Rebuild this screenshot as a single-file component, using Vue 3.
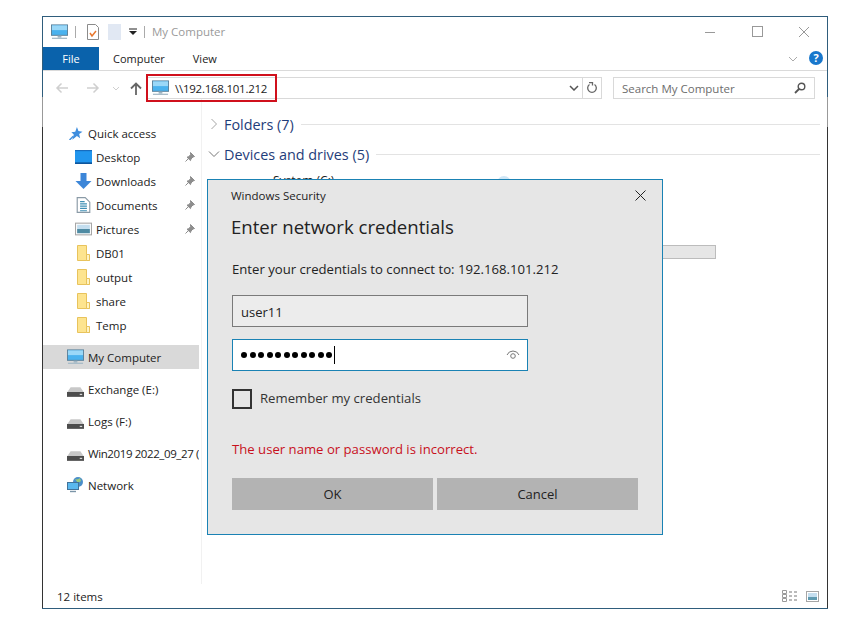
<script setup>
const quick = [
  { label: 'Desktop', icon: 'desktop', pin: true },
  { label: 'Downloads', icon: 'down', pin: true },
  { label: 'Documents', icon: 'doc', pin: true },
  { label: 'Pictures', icon: 'pic', pin: true },
  { label: 'DB01', icon: 'folder' },
  { label: 'output', icon: 'folder' },
  { label: 'share', icon: 'folder' },
  { label: 'Temp', icon: 'folder' },
]
const drives = [
  { label: 'Exchange (E:)' },
  { label: 'Logs (F:)' },
  { label: 'Win2019 2022_09_27 (G:)', tight: true },
]
const dots = 11
</script>

<template>
  <div class="page">
    <svg class="defs" aria-hidden="true">
      <symbol id="mon" viewBox="0 0 18 16">
        <rect x="0.5" y="0.5" width="17" height="11" fill="#4ab2ee" stroke="#5a7f98" />
        <rect x="1" y="1" width="16" height="5" fill="#9ad8f8" />
        <rect x="7" y="12" width="4" height="2" fill="#9fb4c2" />
        <rect x="1" y="14" width="16" height="1.4" fill="#a9bcc8" />
      </symbol>
      <symbol id="desktop" viewBox="0 0 16 13">
        <rect width="16" height="13" fill="#2196ee" />
        <rect width="16" height="1" fill="#1668b8" />
        <rect y="11.6" width="16" height="1.4" fill="#0b4f94" />
      </symbol>
      <symbol id="down" viewBox="0 0 16 16">
        <path d="M5 0h6v8h5l-8 8-8-8h5z" fill="#3c86d8" />
      </symbol>
      <symbol id="doc" viewBox="0 0 12 14">
        <path d="M.5.5h7l4 4v9H.5z" fill="#fff" stroke="#8a9aa6" />
        <path d="M3 4h4M3 6h6M3 8h6M3 10h6M3 12h6" stroke="#3f8fb5" />
      </symbol>
      <symbol id="pic" viewBox="0 0 16 12">
        <rect x=".5" y=".5" width="15" height="11" fill="#fff" stroke="#a6a6a6" />
        <rect x="2" y="2" width="12" height="4" fill="#c4deef" />
        <rect x="2" y="6" width="12" height="4" fill="#4f8ba3" />
      </symbol>
      <symbol id="folder" viewBox="0 0 13 16">
        <path d="M.5.5h9v12h3v3H.5z" fill="#fde48f" stroke="#e8c35c" />
        <path d="M9.5 9.5h3v6h-3z" fill="#fff3c4" stroke="#e8c35c" />
      </symbol>
      <symbol id="pin" viewBox="0 0 10 10">
        <path d="M5.5.5l4 4-1.5.5-2 2-.5 1.6L2 5.2l1.6-.5 2-2zM3.4 6.6L.5 9.5" fill="#8d8d8d" stroke="#8d8d8d" />
      </symbol>
      <symbol id="drive" viewBox="0 0 14 8">
        <path d="M3 0h8l3 4.5H0z" fill="#c8c8c8" />
        <rect y="4" width="14" height="4" fill="#4d4d4d" />
        <rect x="10.5" y="5.5" width="2" height="1" fill="#d8d8d8" />
      </symbol>
      <symbol id="star" viewBox="0 0 14 14">
        <path d="M8 0l1.6 4.2L14 5l-3.6 2.6 1 4.4L8 9.600 3 13.600 4.600 8 2 5.600l4.200-.6z" fill="#3f8ede" />
        <path d="M0 14l4-4" stroke="#3f8ede" stroke-width="1.5" />
      </symbol>
      <symbol id="net" viewBox="0 0 17 16">
        <circle cx="11" cy="5" r="5" fill="#4b8fc9" />
        <path d="M8 2c2 1 4 0 5-1l1 3-3 2z" fill="#9ccb7d" />
        <rect x=".5" y="5.5" width="11" height="7" fill="#5ab8ee" stroke="#41739a" />
        <path d="M3 14.500h6" stroke="#7b95a8" stroke-width="1.400" />
      </symbol>
    </svg>

    <div class="window">
      <header class="titlebar">
        <svg class="ic-title"><use href="#mon" /></svg>
        <span class="tsep"></span>
        <svg class="qat-doc" viewBox="0 0 12 16">
          <path d="M.5.5h8l3 3v12H.5z" fill="#fff" stroke="#8b8b8b" />
          <path d="M3 9l2 3 4-5" fill="none" stroke="#e8762c" stroke-width="1.500" />
        </svg>
        <span class="qat-blank"></span>
        <svg class="qat-arrow" viewBox="0 0 8 8">
          <path d="M0 1h8" stroke="#222" />
          <path d="M0 3h8L4 7z" fill="#222" />
        </svg>
        <span class="tsep sep2"></span>
        <span class="title-text">My Computer</span>
        <div class="winctl">
          <svg class="w12" viewBox="0 0 12 12"><path d="M1 6.500h10" stroke="#999" /></svg>
          <svg class="w12 max" viewBox="0 0 12 12"><rect x=".5" y=".5" width="10" height="10" fill="none" stroke="#999" /></svg>
          <svg class="w12" viewBox="0 0 12 12"><path d="M1 1l10 10M11 1L1 11" stroke="#999" /></svg>
        </div>
      </header>

      <nav class="tabs">
        <span class="file">File</span>
        <span class="tab tab-c">Computer</span>
        <span class="tab tab-v">View</span>
        <svg class="ribbon-chev" viewBox="0 0 10 6"><path d="M1 1l4 4 4-4" fill="none" stroke="#aaa" /></svg>
        <span class="help">?</span>
      </nav>

      <div class="navbar">
        <div class="arrows">
          <svg class="arr" viewBox="0 0 14 12"><path d="M13 6H2M6.500 1.500L2 6l4.500 4.500" fill="none" stroke="#cfcfcf" stroke-width="1.500" /></svg>
          <svg class="arr" viewBox="0 0 14 12"><path d="M1 6h11M7.500 1.500L12 6l-4.500 4.500" fill="none" stroke="#cfcfcf" stroke-width="1.500" /></svg>
          <svg class="mini" viewBox="0 0 8 5"><path d="M1 1l3 3 3-3" fill="none" stroke="#cfcfcf" /></svg>
          <svg class="up" viewBox="0 0 12 13"><path d="M6 13V2M1 6.500L6 1.500l5 5" fill="none" stroke="#666" stroke-width="1.800" /></svg>
        </div>
        <div class="address">
          <svg class="ic-addr"><use href="#mon" /></svg>
          <span class="addr-text">\\192.168.101.212</span>
          <svg class="addr-chev" viewBox="0 0 10 6"><path d="M1 1l4 4 4-4" fill="none" stroke="#555" stroke-width="1.500" /></svg>
          <span class="refresh">
            <svg viewBox="0 0 12 12" class="w12"><path d="M3.500 2.500a4.300 4.300 0 1 0 5 0M3 .5h3.500v3" fill="none" stroke="#666" stroke-width="1.300" /></svg>
          </span>
          <span class="redbox"></span>
        </div>
        <div class="search">
          <span>Search My Computer</span>
          <svg class="w12" viewBox="0 0 12 12"><circle cx="7.500" cy="4.500" r="3.300" fill="none" stroke="#555" stroke-width="1.400" /><path d="M5 7l-4 4" stroke="#555" stroke-width="1.800" /></svg>
        </div>
      </div>

      <div class="body">
        <aside class="side">
          <div class="row head">
            <svg class="ic star"><use href="#star" /></svg>
            <span>Quick access</span>
          </div>
          <div v-for="q in quick" :key="q.label" class="row sub">
            <svg class="ic"><use :href="'#' + q.icon" /></svg>
            <span>{{ q.label }}</span>
            <svg v-if="q.pin" class="pin"><use href="#pin" /></svg>
          </div>
          <div class="row head sel gap">
            <svg class="ic"><use href="#mon" /></svg>
            <span>My Computer</span>
          </div>
          <div v-for="d in drives" :key="d.label" class="row head gap">
            <svg class="ic drive"><use href="#drive" /></svg>
            <span :class="{ tight: d.tight }">{{ d.label }}</span>
          </div>
          <div class="row head gap">
            <svg class="ic"><use href="#net" /></svg>
            <span>Network</span>
          </div>
        </aside>
        <main class="content">
          <div class="group">
            <svg class="chev" viewBox="0 0 8 12"><path d="M1.500 1l5 5-5 5" fill="none" stroke="#a6a6a6" /></svg>
            <span>Folders (7)</span>
            <i></i>
          </div>
          <div class="group">
            <svg class="chev2" viewBox="0 0 12 8"><path d="M1 1.500l5 5 5-5" fill="none" stroke="#777" /></svg>
            <span>Devices and drives (5)</span>
            <i></i>
          </div>
          <div class="drive-name">
            <span>System (C:)</span>
            <span class="os-logo"></span>
          </div>
          <div class="usage"></div>
        </main>
      </div>

      <footer class="status">
        <span>12 items</span>
        <div class="views">
          <svg class="v1" viewBox="0 0 16 12">
            <path d="M.5.500h4v3h-4zM.5 4.500h4v3h-4zM.5 8.500h4v3h-4z" fill="#fff" stroke="#9a9a9a" />
            <path d="M7 2h3M12 2h3M7 6h3M12 6h3M7 10h3M12 10h3" stroke="#777" />
          </svg>
          <svg class="v2" viewBox="0 0 13 11">
            <rect x=".5" y=".5" width="12" height="10" fill="#fff" stroke="#a6a6a6" />
            <rect x="2" y="2" width="9" height="4" fill="#c4deef" />
            <rect x="2" y="6" width="9" height="3" fill="#5f9ab0" />
          </svg>
        </div>
      </footer>

      <section class="dialog">
        <div class="dlg-top">
          <span>Windows Security</span>
          <svg class="x" viewBox="0 0 11 11"><path d="M.5.500l10 10M10.500.500l-10 10" stroke="#222" /></svg>
        </div>
        <h1>Enter network credentials</h1>
        <p class="connect">Enter your credentials to connect to: 192.168.101.212</p>
        <div class="input">user11</div>
        <div class="input pass">
          <span v-for="n in dots" :key="n" class="dot"></span>
          <span class="caret"></span>
          <svg class="eye" viewBox="0 0 14 10">
            <path d="M1 5a6.500 6.500 0 0 1 12 0" fill="none" stroke="#777" />
            <circle cx="7" cy="6" r="2.300" fill="none" stroke="#777" />
          </svg>
        </div>
        <label class="remember"><span class="box"></span><span class="rem-text">Remember my credentials</span></label>
        <p class="err">The user name or password is incorrect.</p>
        <div class="btns">
          <span class="btn">OK</span>
          <span class="btn">Cancel</span>
        </div>
      </section>
    </div>
  </div>
</template>

<style scoped>
.page {
  width: 853px;
  height: 619px;
  background: #fff;
  padding: 16px 0 0 42px;
  box-sizing: border-box;
  font-family: "Open Sans", "Noto Sans", sans-serif;
  color: #222;
  overflow: hidden;
}
.defs { display: none; }
.window {
  position: relative;
  width: 786px;
  height: 593px;
  box-sizing: border-box;
  border: 1px solid;
  border-image: linear-gradient(to bottom, #2f5d7c 0 81px, #999 81px 111px, #333 111px calc(100% - 1px), #2f5d7c calc(100% - 1px)) 1;
  display: flex;
  flex-direction: column;
  background: #fff;
}
.titlebar {
  height: 30px;
  display: flex;
  align-items: center;
  padding: 0 0 1px 8px;
  box-sizing: border-box;
  flex: none;
}
.ic-title { width: 17px; height: 16px; }
.tsep { width: 1px; height: 12px; background: #aaa; margin-left: 7px; }
.qat-doc { width: 12px; height: 16px; margin-left: 11px; }
.qat-blank { width: 13px; height: 16px; background: #e1e8f3; margin-left: 9px; }
.qat-arrow { width: 8px; height: 8px; margin-left: 8px; }
.sep2 { margin-left: 7px; }
.title-text { font-size: 11.500px; color: #9a9a9a; margin-left: 7px; }
.winctl { margin-left: auto; display: flex; gap: 35px; padding-right: 17px; align-items: center; }
.w12 { width: 12px; height: 12px; display: block; }
.max { margin-left: 1px; margin-right: -1px; }
.tabs {
  height: 24px;
  flex: none;
  display: flex;
  align-items: center;
  border-bottom: 1px solid #dadada;
  box-sizing: border-box;
  font-size: 11px;
  padding-right: 4px;
}
.file {
  width: 56px;
  height: 23px;
  background: #0a62ab;
  color: #fff;
  text-align: center;
  line-height: 23px;
}
.tab-c { margin-left: 14px; }
.tab-v { margin-left: 28px; }
.ribbon-chev { width: 10px; height: 6px; margin-left: auto; }
.help {
  width: 14px;
  height: 14px;
  border-radius: 50%;
  background: #1877cc;
  color: #fff;
  font-weight: 700;
  font-size: 11px;
  line-height: 14px;
  text-align: center;
  margin: 0 0 1px 11px;
}
.navbar {
  flex: none;
  height: 28px;
  display: flex;
  align-items: center;
  padding-top: 6px;
  box-sizing: border-box;
}
.arrows { width: 103px; display: flex; align-items: center; padding-left: 12px; box-sizing: border-box; }
.arr { width: 14px; height: 12px; margin-right: 17px; }
.mini { width: 8px; height: 5px; margin-left: -5px; }
.up { width: 12px; height: 13px; margin-left: 10px; }
.address {
  position: relative;
  width: 456px;
  height: 22px;
  box-sizing: border-box;
  border: 1px solid #d9d9d9;
  display: flex;
  align-items: center;
  font-size: 11.500px;
}
.ic-addr { width: 17px; height: 16px; margin-left: 5px; }
.addr-text { margin-left: 6px; color: #222; letter-spacing: -0.25px; }
.addr-chev { width: 10px; height: 6px; margin-left: auto; margin-right: 3px; }
.refresh { width: 18px; height: 20px; border-left: 1px solid #d9d9d9; display: flex; align-items: center; justify-content: center; }
.redbox {
  position: absolute;
  left: -1px;
  top: -4px;
  width: 131px;
  height: 28px;
  box-sizing: border-box;
  border: 2px solid #d0101c;
}
.search {
  width: 202px;
  height: 22px;
  margin-left: 11px;
  box-sizing: border-box;
  border: 1px solid #d9d9d9;
  display: flex;
  align-items: center;
  justify-content: space-between;
  padding: 0 8px;
  font-size: 11.500px;
  color: #6d6d6d;
}
.body { flex: 1; display: flex; min-height: 0; }
.side {
  width: 158px;
  flex: none;
  padding-top: 22px;
  border-right: 1px solid #f1f1f1;
}
.row {
  width: 156px;
  height: 24px;
  display: flex;
  align-items: center;
  font-size: 11.500px;
  white-space: nowrap;
  overflow: hidden;
  box-sizing: border-box;
}
.row span { flex: none; }
.tight { letter-spacing: -0.4px; }
.head { padding-left: 24px; }
.head .ic { margin-right: 4px; }
.sub { padding-left: 32px; }
.sub .ic { margin-right: 4px; }
.ic { width: 17px; height: 16px; flex: none; }
.head .star { width: 14px; height: 13px; margin-left: 2px; margin-right: 5px; }
.drive { margin-top: 6px; }
.gap { margin-top: 8px; }
.sel { background: #d9d9d9; }
.pin { width: 10px; height: 10px; margin-left: auto; margin-right: 4px; flex: none; }
.content { flex: 1; padding: 16px 7px 0 6px; }
.group {
  display: flex;
  align-items: center;
  height: 18px;
  margin-bottom: 12px;
  font-size: 14.400px;
  color: #1f3d7a;
}
.group i { flex: 1; height: 1px; background: #e3e3e3; margin-left: 7px; }
.chev { width: 8px; height: 12px; margin: 0 6px 0 2px; }
.chev2 { width: 12px; height: 8px; margin-right: 4px; }
.drive-name { display: flex; height: 17px; font-size: 12px; margin: -3px 0 0 65px; }
.os-logo { width: 14px; height: 14px; border-radius: 50%; background: #cfe6f6; margin: 4px 0 0 163px; }
.usage { width: 185px; height: 14px; margin: 56px 0 0 323px; background: #e6e6e6; border: 1px solid #bcbcbc; box-sizing: border-box; }
.status {
  height: 24px;
  flex: none;
  display: flex;
  align-items: center;
  justify-content: space-between;
  font-size: 11.500px;
  padding: 0 8px 0 14px;
}
.views { display: flex; gap: 8px; align-items: center; }
.v1 { width: 16px; height: 12px; }
.v2 { width: 13px; height: 11px; }
.dialog {
  position: absolute;
  left: 164px;
  top: 162px;
  width: 456px;
  height: 356px;
  box-sizing: border-box;
  border: 1px solid #1a82b4;
  background: #e6e6e6;
  padding: 0 24px;
}
.dlg-top { display: flex; align-items: center; justify-content: space-between; height: 30px; font-size: 11.500px; margin: 0 -8px 0 -1px; }
.x { width: 11px; height: 11px; }
h1 { margin: 2px 0 0 -1px; font-weight: 400; font-size: 18.600px; line-height: 30px; color: #222; }
.connect { margin: 17px 0 0; font-size: 13.150px; line-height: 20px; }
.input {
  width: 296px;
  height: 32px;
  margin-top: 16px;
  box-sizing: border-box;
  border: 1px solid #7a7a7a;
  background: #ececec;
  padding-left: 8px;
  font-size: 13px;
  line-height: 32px;
}
.pass {
  margin-top: 12px;
  border-color: #1a82b4;
  background: #fff;
  display: flex;
  align-items: center;
  gap: 2.500px;
}
.dot { width: 6px; height: 6px; border-radius: 50%; background: #000; flex: none; }
.caret { width: 1px; height: 18px; background: #000; margin-left: -1px; }
.eye { width: 14px; height: 10px; margin-left: auto; margin-right: 7px; }
.remember {
  margin-top: 18px;
  display: flex;
  align-items: center;
  height: 20px;
  font-size: 13.150px;
  color: #333;
}
.rem-text { margin-top: -2px; }
.box { width: 20px; height: 20px; box-sizing: border-box; border: 2px solid #333; margin-right: 8px; }
.err { margin: 30px 0 0; color: #c8101c; font-size: 13.150px; line-height: 20px; }
.btns { display: flex; gap: 4px; margin-top: 19px; width: 406px; }
.btn {
  flex: 1;
  height: 32px;
  background: #b3b3b3;
  text-align: center;
  line-height: 32px;
  font-size: 13px;
}
</style>
